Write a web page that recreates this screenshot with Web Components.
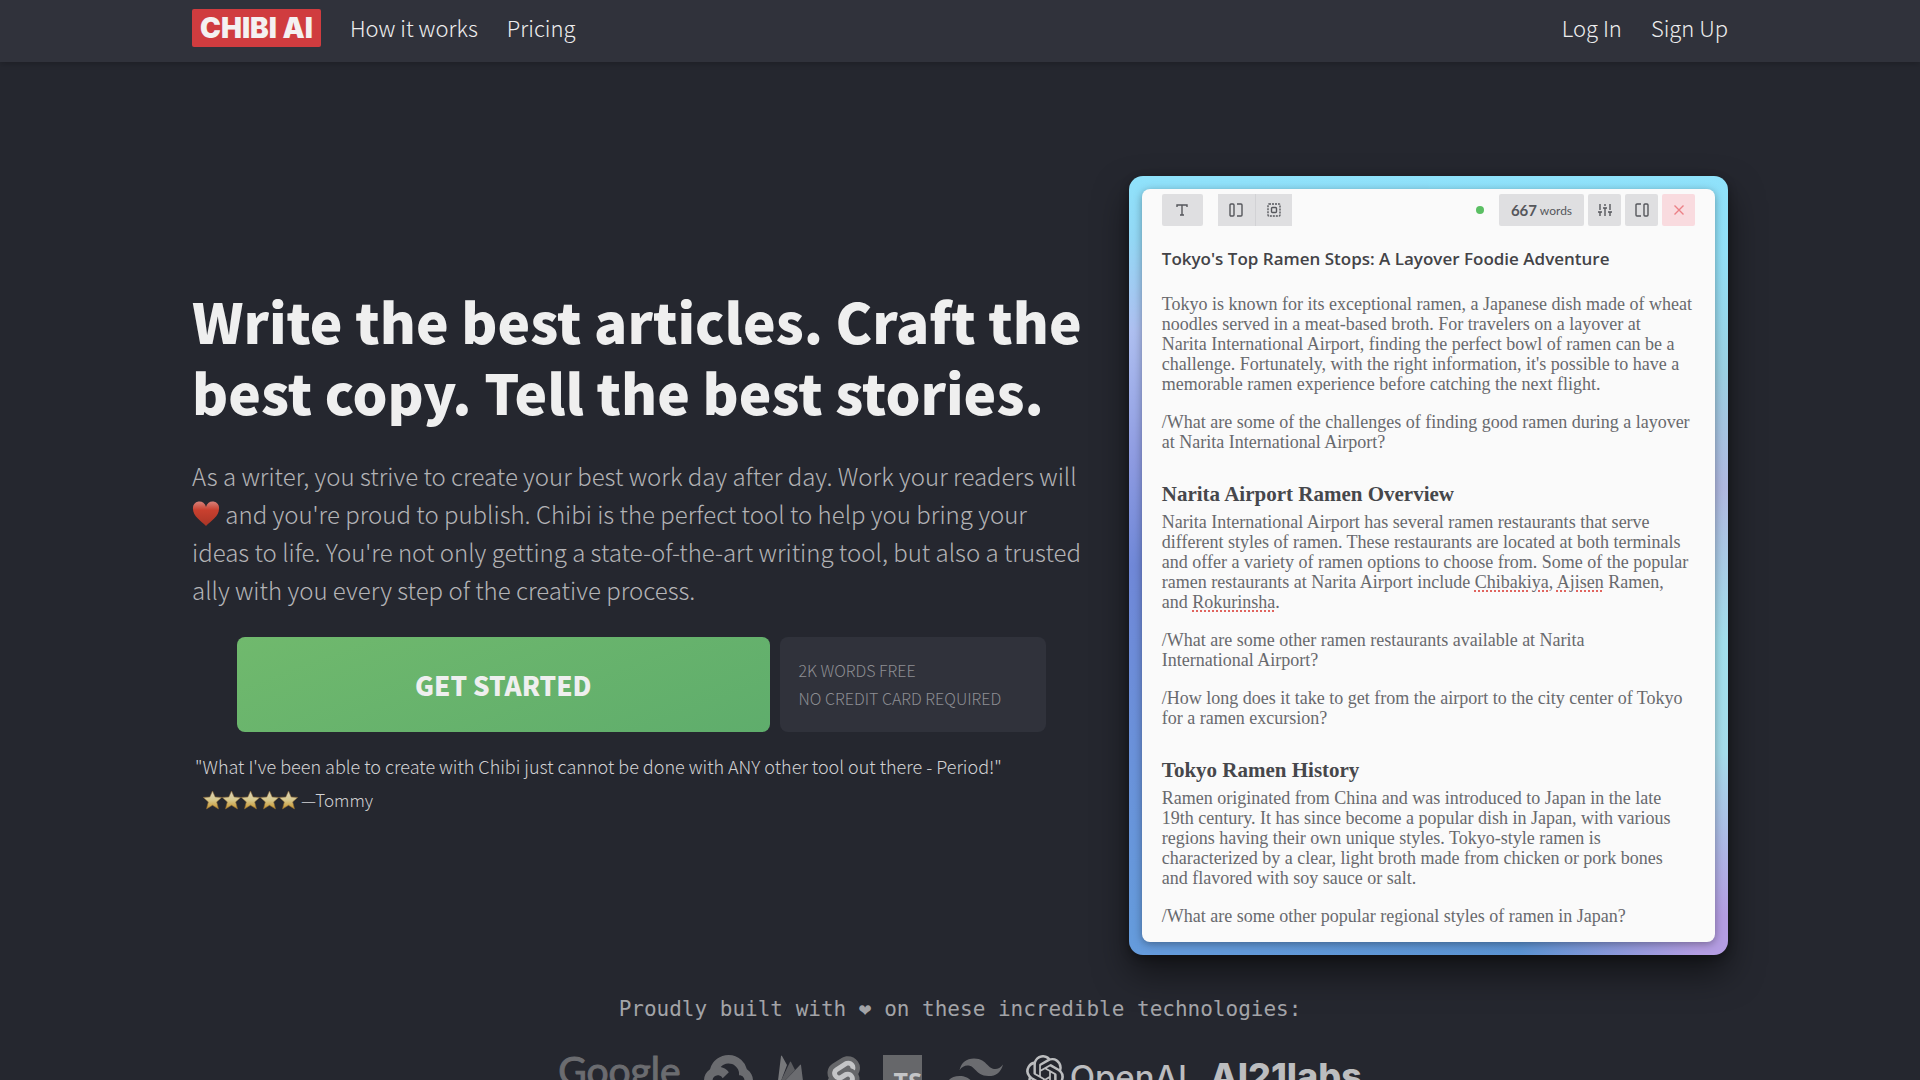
<!DOCTYPE html>
<html lang="en">
<head>
<meta charset="utf-8">
<title>Chibi AI</title>
<style>
  html, body { height: 100%; }
  body {
    margin: 0;
    overflow: hidden;
    background: #25272f;
    color: #ededee;
    font-family: "Noto Sans CJK SC", "Open Sans", sans-serif;
  }
</style>
</head>
<body>
<chibi-nav>
  <a href="#how">How it works</a>
  <a href="#pricing">Pricing</a>
  <a href="#login" slot="account">Log In</a>
  <a href="#signup" slot="account">Sign Up</a>
</chibi-nav>
<chibi-hero>
  <hero-copy></hero-copy>
  <editor-card slot="preview"></editor-card>
</chibi-hero>
<tech-strip></tech-strip>

<script>
const define = (name, html) => {
  const template = document.createElement("template")
  template.innerHTML = html
  customElements.define(name, class extends HTMLElement {
    constructor() {
      super()
      this.attachShadow({ mode: "open" })
      this.shadowRoot.appendChild(template.content.cloneNode(true))
    }
  })
}

define("chibi-nav", `
<style>
  :host {
    display: flex;
    align-items: center;
    height: 62px;
    padding: 0 10%;
    background: #30323b;
    box-shadow: 0 2px 6px rgba(0, 0, 0, .2);
  }
  nav { display: flex; flex: 1; align-items: center; justify-content: space-between; padding-bottom: 6px; }
  div { display: flex; align-items: center; gap: 29px; }
  .logo {
    padding: 0 8px;
    border-radius: 2px;
    background: #d03c3f;
    color: #f4f1f1;
    font: 900 28px/38px Inter, sans-serif;
    text-decoration: none;
  }
  ::slotted(a) { padding-bottom: 2px; color: #ededee; font-size: 22px; font-weight: 300; line-height: 36px; text-decoration: none; }
</style>
<nav>
  <div><a class="logo" href="#home">CHIBI AI</a><slot></slot></div>
  <div><slot name="account"></slot></div>
</nav>
`)

define("chibi-hero", `
<style>
  :host {
    display: grid;
    grid-template-columns: minmax(0, 3fr) minmax(0, 2fr);
    column-gap: 38px;
    align-items: center;
    padding: 114px 10% 0;
  }
</style>
<slot></slot>
<slot name="preview"></slot>
`)

define("hero-copy", `
<style>
  :host { display: block; padding-bottom: 30px; }
  h1 { margin: 0; color: #efefef; font-size: 55px; line-height: 71px; font-weight: 900; white-space: nowrap; }
  .lead { margin: 30px 0 28px; color: #b3b3b6; font-size: 24px; line-height: 38px; font-weight: 300; white-space: nowrap; }
  .heart { width: 28px; height: 26px; vertical-align: -3px; }
  .cta { display: grid; grid-template-columns: 2fr 1fr; gap: 10px; width: 90%; margin: 0 auto; }
  button {
    height: 95px;
    border: 0;
    border-radius: 8px;
    background: linear-gradient(160deg, #70b96d, #5fad6c);
    color: #efefef;
    font: inherit;
    font-size: 26px;
    font-weight: 900;
  }
  .terms { display: flex; flex-direction: column; justify-content: center; padding: 0 19px; border-radius: 8px; background: #30323b; color: #8d8e93; font-size: 16px; line-height: 28px; font-weight: 300; white-space: nowrap; }
  blockquote { margin: 17px 3px 0; color: #d2d2d4; font-size: 18px; line-height: 34px; font-weight: 300; white-space: nowrap; }
  footer { display: flex; align-items: center; gap: 3px; padding-left: 8px; font-size: 17px; }
  .stars { width: 95px; height: 20px; }
</style>
<h1>Write the best articles. Craft the<br>best copy. Tell the best stories.</h1>
<p class="lead">As a writer, you strive to create your best work day after day. Work your readers will<br>
<svg class="heart" viewBox="0 0 28 26" role="img" aria-label="love">
  <defs><linearGradient id="h" x2="0" y2="1"><stop offset="0" stop-color="#d9827a"/><stop offset=".35" stop-color="#c9402f"/><stop offset="1" stop-color="#a93526"/></linearGradient></defs>
  <path fill="url(#h)" d="M14 25C9 20 1 15 1 8a6.500 6.500 0 0 1 13-2 6.500 6.500 0 0 1 13 2c0 7-8 12-13 17Z"/>
</svg> and you're proud to publish. Chibi is the perfect tool to help you bring your<br>
ideas to life. You're not only getting a state-of-the-art writing tool, but also a trusted<br>
ally with you every step of the creative process.</p>
<div class="cta">
  <button type="button">GET STARTED</button>
  <div class="terms"><span>2K WORDS FREE</span><span>NO CREDIT CARD REQUIRED</span></div>
</div>
<blockquote>"What I've been able to create with Chibi just cannot be done with ANY other tool out there - Period!"
  <footer>
    <svg class="stars" viewBox="0 0 95 20" role="img" aria-label="5 stars">
      <defs>
        <linearGradient id="s" x2="0" y2="1"><stop offset="0" stop-color="#d9d3bd"/><stop offset=".5" stop-color="#d8c98e"/><stop offset="1" stop-color="#c9952c"/></linearGradient>
        <path id="star" fill="url(#s)" stroke="#8b6a35" stroke-width=".6" d="m9.500 1 2.700 6 6.500.400-5 4.500 1.800 7-6-3.600-6 3.600 1.800-7-5-4.500L6.800 7Z"/>
      </defs>
      <use href="#star"/><use href="#star" x="19"/><use href="#star" x="38"/><use href="#star" x="57"/><use href="#star" x="76"/>
    </svg>
    <span>—Tommy</span>
  </footer>
</blockquote>
`)

define("tool-button", `
<style>
  :host { display: flex; }
  button { display: flex; flex: 1; align-items: center; justify-content: center; padding: 0; border: 0; border-radius: var(--radius, 2px); background: var(--tool-bg, #dfdfe1); color: var(--tool-ink, #56575c); font: 14px Lato, sans-serif; }
</style>
<button type="button"><slot></slot></button>
`)

define("editor-toolbar", `
<style>
  :host { display: flex; align-items: center; height: 32px; gap: 4px; }
  tool-button { width: 33px; height: 32px; }
  .type { width: 41px; margin-right: 11px; }
  .pair { display: flex; gap: 1px; background: #d2d2d5; }
  .pair tool-button { width: 37px; --radius: 0; }
  .pair tool-button + tool-button { width: 36px; }
  .dot { width: 8px; height: 8px; margin: 0 11px 0 auto; border-radius: 50%; background: #5abf63; }
  .count { width: 85px; white-space: pre; }
  .count b { font-size: 15px; }
  .count span { font-size: 12px; }
  .close { --tool-bg: #f9dbdf; --tool-ink: #ec8086; }
  svg { width: 16px; height: 16px; fill: none; stroke: currentColor; stroke-width: 1.400; }
</style>
<tool-button class="type"><svg viewBox="0 0 16 16"><path d="M3 5V3h10v2M8 3v10M6 13h4"/></svg></tool-button>
<div class="pair">
  <tool-button><svg viewBox="0 0 16 16"><rect x="2" y="2" width="4" height="12" rx="1"/><path d="M9 2h4q1 0 1 1v10q0 1-1 1H9"/></svg></tool-button>
  <tool-button><svg viewBox="0 0 16 16"><rect x="2" y="2" width="12" height="12" rx="1" stroke-dasharray="2 1"/><rect x="5.500" y="5.500" width="5" height="5" rx="1"/></svg></tool-button>
</div>
<span class="dot"></span>
<tool-button class="count"><b>667</b><span> words</span></tool-button>
<tool-button><svg viewBox="0 0 16 16"><path d="M3 2v6M8 2v2M8 6v8M13 2v6M3 10v4M13 10v4M1 10h4M6 6h4M11 10h4"/></svg></tool-button>
<tool-button><svg viewBox="0 0 16 16"><rect x="10" y="2" width="4" height="12" rx="1"/><path d="M7 2H3Q2 2 2 3v10q0 1 1 1h4"/></svg></tool-button>
<tool-button class="close"><svg viewBox="0 0 16 16"><path d="m3.500 3.500 9 9m0-9-9 9"/></svg></tool-button>
`)

define("editor-card", `
<style>
  :host {
    display: block;
    padding: 13px;
    border-radius: 14px;
    background:
      linear-gradient(90deg, #659bdc, #5b93d2 65%, #b49de2 95%) 0 100% / 100% 13px no-repeat,
      linear-gradient(#8fe2fb, #93d8f5 8%, #aebff0 20%, #8f9ce2 36%, #7088d8 50%, #659bdc 97%) 0 0 / 50% 100% no-repeat,
      linear-gradient(#8fe2fb, #93e0f7 10%, #9bd0e2 25%, #b0b8e0 40%, #a2dfec 60%, #a5dcea 74%, #b49de2 95%);
    box-shadow: 0 18px 34px rgba(0, 0, 0, .5), 0 3px 10px rgba(0, 0, 0, .3);
  }
  article {
    padding: 5px 20px 16px;
    border-radius: 8px;
    background: #fafafa;
    box-shadow: 0 2px 8px rgba(0, 0, 0, .35);
    color: #68696d;
    font: 18px/20px "Liberation Serif", serif;
    white-space: nowrap;
  }
  h2 { margin: 19px 0 21px; color: #434347; font: 600 17px/28px "Open Sans", sans-serif; }
  h3 { margin: 28px 0 4px; color: #46474b; font-size: 21px; line-height: 28px; }
  p { margin: 0 0 18px; }
  p:last-child { margin: 0; }
  u { text-decoration: underline dotted #e0645e 2px; text-underline-offset: 2px; }
</style>
<article>
  <editor-toolbar></editor-toolbar>
  <h2>Tokyo's Top Ramen Stops: A Layover Foodie Adventure</h2>
  <p>Tokyo is known for its exceptional ramen, a Japanese dish made of wheat<br>noodles served in a meat-based broth. For travelers on a layover at<br>Narita International Airport, finding the perfect bowl of ramen can be a<br>challenge. Fortunately, with the right information, it's possible to have a<br>memorable ramen experience before catching the next flight.</p>
  <p>/What are some of the challenges of finding good ramen during a layover<br>at Narita International Airport?</p>
  <h3>Narita Airport Ramen Overview</h3>
  <p>Narita International Airport has several ramen restaurants that serve<br>different styles of ramen. These restaurants are located at both terminals<br>and offer a variety of ramen options to choose from. Some of the popular<br>ramen restaurants at Narita Airport include <u>Chibakiya</u>, <u>Ajisen</u> Ramen,<br>and <u>Rokurinsha</u>.</p>
  <p>/What are some other ramen restaurants available at Narita<br>International Airport?</p>
  <p>/How long does it take to get from the airport to the city center of Tokyo<br>for a ramen excursion?</p>
  <h3>Tokyo Ramen History</h3>
  <p>Ramen originated from China and was introduced to Japan in the late<br>19th century. It has since become a popular dish in Japan, with various<br>regions having their own unique styles. Tokyo-style ramen is<br>characterized by a clear, light broth made from chicken or pork bones<br>and flavored with soy sauce or salt.</p>
  <p>/What are some other popular regional styles of ramen in Japan?</p>
</article>
`)

define("tech-strip", `
<style>
  :host { display: block; padding-top: 40px; color: #a3a4a8; text-align: center; }
  p { margin: 0 0 32px; font: 21px/28px "DejaVu Sans Mono", monospace; }
  .logos { display: flex; justify-content: center; align-items: flex-start; gap: 23px; color: #6b6c70; }
  svg { display: block; height: 42px; }
  .google { font: 39px/30px Lato, sans-serif; -webkit-text-stroke: 1px; }
  .openai { display: flex; gap: 6px; color: #bcbdbf; font: 500 33px/44px Inter, sans-serif; }
  .openai svg { height: 38px; }
  .ai21 { color: #bcbdbf; font: 800 36px/42px Inter, sans-serif; }
  .ts { display: flex; align-items: flex-end; justify-content: flex-end; width: 39px; height: 39px; background: #66676a; color: #c4c5c7; font: 700 25px/26px "Open Sans", sans-serif; }
</style>
<p>Proudly built with ❤ on these incredible technologies:</p>
<div class="logos">
  <span class="google">Google</span>
  <svg width="49" viewBox="0 2.380 24 20.500" fill="currentColor" role="img" aria-label="Google Cloud"><path d="M12.190 2.380a9.344 9.344 0 0 0-9.234 6.893c.053-.020-.055.013 0 0-3.875 2.551-3.922 8.110-.247 10.941l.006-.007-.007.030a6.717 6.717 0 0 0 4.077 1.356h5.173l.030.030h5.192c6.687.053 9.376-8.605 3.835-12.350a9.365 9.365 0 0 0-2.821-4.552l-.043.043.006-.050A9.344 9.344 0 0 0 12.190 2.380zm-.358 4.146c1.244-.040 2.518.368 3.486 1.150a5.186 5.186 0 0 1 1.862 4.078v.518c3.530-.070 3.530 5.262 0 5.193h-5.193l-.008.009v-.040H6.785a2.590 2.590 0 0 1-1.067-.230h.001a2.597 2.597 0 1 1 3.437-3.437l3.013-3.012A6.747 6.747 0 0 0 8.110 8.240c.018-.010.040-.026.054-.023a5.186 5.186 0 0 1 3.670-1.690z"/></svg>
  <svg width="28" viewBox="0 0 28 42" role="img" aria-label="Firebase"><path fill="#77787b" d="M1 34 5 1q.500-1 1 0l5 9-9 24Z"/><path fill="#5b5c60" d="m1 34 13-27q.500-1 1 0l4 8Z"/><path fill="#6b6c70" d="m1 34 23-24q1-1 1 0l3 24-14 8Z"/></svg>
  <svg width="33" viewBox="2 0 20 24" role="img" aria-label="Svelte"><path fill="#66676a" d="M20.712 3.175C18.484-.015 14.082-.960 10.900 1.068L5.310 4.630a6.412 6.412 0 0 0-2.896 4.295 6.753 6.753 0 0 0 .666 4.336 6.430 6.430 0 0 0-.960 2.396 6.833 6.833 0 0 0 1.168 5.167c2.229 3.190 6.630 4.135 9.812 2.108l5.590-3.562a6.410 6.410 0 0 0 2.896-4.295 6.756 6.756 0 0 0-.665-4.336 6.429 6.429 0 0 0 .958-2.396 6.831 6.831 0 0 0-1.167-5.168Z"/><path fill="#c4c5c7" d="M10.354 21.125a4.440 4.440 0 0 1-4.765-1.767 4.109 4.109 0 0 1-.703-3.107 3.898 3.898 0 0 1 .134-.522l.105-.321.287.210a7.210 7.210 0 0 0 2.186 1.092l.208.063-.020.208a1.253 1.253 0 0 0 .226.830 1.337 1.337 0 0 0 1.435.533 1.231 1.231 0 0 0 .343-.150l5.590-3.562a1.164 1.164 0 0 0 .524-.778 1.242 1.242 0 0 0-.211-.937 1.338 1.338 0 0 0-1.435-.533 1.230 1.230 0 0 0-.343.150l-2.133 1.360a4.078 4.078 0 0 1-1.135.499 4.440 4.440 0 0 1-4.765-1.766 4.108 4.108 0 0 1-.702-3.108 3.855 3.855 0 0 1 1.742-2.582l5.589-3.563a4.072 4.072 0 0 1 1.135-.499 4.440 4.440 0 0 1 4.765 1.767 4.109 4.109 0 0 1 .703 3.107 3.943 3.943 0 0 1-.134.522l-.105.321-.286-.210a7.204 7.204 0 0 0-2.187-1.093l-.208-.063.020-.207a1.255 1.255 0 0 0-.226-.831 1.337 1.337 0 0 0-1.435-.532 1.231 1.231 0 0 0-.343.150L8.620 9.368a1.162 1.162 0 0 0-.524.778 1.240 1.240 0 0 0 .211.937 1.338 1.338 0 0 0 1.435.533 1.235 1.235 0 0 0 .344-.151l2.132-1.360a4.067 4.067 0 0 1 1.135-.498 4.440 4.440 0 0 1 4.765 1.766 4.108 4.108 0 0 1 .702 3.108 3.857 3.857 0 0 1-1.742 2.583l-5.589 3.562a4.072 4.072 0 0 1-1.135.499"/></svg>
  <span class="ts">TS</span>
  <svg width="58" viewBox="0 4 24 16" fill="currentColor" role="img" aria-label="Tailwind CSS"><path d="M12 4.800c-3.200 0-5.200 1.600-6 4.800 1.200-1.600 2.600-2.200 4.200-1.800.913.228 1.565.890 2.288 1.624C13.666 10.618 15.027 12 18 12c3.200 0 5.200-1.600 6-4.800-1.200 1.600-2.600 2.200-4.200 1.800-.913-.228-1.565-.890-2.288-1.624C16.337 6.182 14.976 4.800 12 4.800zM6 12c-3.200 0-5.200 1.600-6 4.800 1.200-1.600 2.600-2.200 4.200-1.800.913.228 1.565.890 2.288 1.624C7.666 17.818 9.027 19.200 12 19.200c3.200 0 5.200-1.600 6-4.800-1.200 1.600-2.600 2.200-4.200 1.800-.913-.228-1.565-.890-2.288-1.624C10.337 13.382 8.976 12 6 12z"/></svg>
  <span class="openai"><svg width="38" viewBox="0 0 24 24" fill="currentColor" aria-hidden="true"><path d="M22.282 9.821a5.985 5.985 0 0 0-.516-4.910 6.046 6.046 0 0 0-6.510-2.900A6.065 6.065 0 0 0 4.981 4.182a5.985 5.985 0 0 0-3.998 2.900 6.046 6.046 0 0 0 .743 7.097 5.980 5.980 0 0 0 .510 4.911 6.051 6.051 0 0 0 6.515 2.900A5.985 5.985 0 0 0 13.260 24a6.056 6.056 0 0 0 5.772-4.206 5.990 5.990 0 0 0 3.998-2.900 6.056 6.056 0 0 0-.748-7.073zM13.260 22.430a4.476 4.476 0 0 1-2.876-1.040l.141-.081 4.779-2.758a.795.795 0 0 0 .392-.681v-6.737l2.020 1.168a.071.071 0 0 1 .038.052v5.583a4.504 4.504 0 0 1-4.494 4.494zM3.600 18.304a4.470 4.470 0 0 1-.535-3.014l.142.085 4.783 2.759a.771.771 0 0 0 .780 0l5.843-3.369v2.332a.080.080 0 0 1-.033.062L9.740 19.950a4.500 4.500 0 0 1-6.140-1.646zM2.341 7.896a4.485 4.485 0 0 1 2.366-1.973V11.600a.766.766 0 0 0 .388.676l5.815 3.355-2.020 1.168a.076.076 0 0 1-.071 0l-4.830-2.786A4.504 4.504 0 0 1 2.341 7.872zm16.597 3.855-5.833-3.387L15.119 7.200a.076.076 0 0 1 .071 0l4.830 2.791a4.494 4.494 0 0 1-.676 8.105v-5.678a.790.790 0 0 0-.407-.667zm2.010-3.023-.141-.085-4.774-2.782a.776.776 0 0 0-.785 0L9.409 9.230V6.897a.066.066 0 0 1 .028-.061l4.830-2.787a4.500 4.500 0 0 1 6.680 4.660zM8.307 12.863l-2.020-1.164a.080.080 0 0 1-.038-.057V6.074a4.500 4.500 0 0 1 7.376-3.453l-.142.080L8.704 5.459a.795.795 0 0 0-.393.681zm1.097-2.365 2.602-1.500 2.607 1.500v2.999l-2.597 1.500-2.607-1.500Z"/></svg>OpenAI</span>
  <span class="ai21">AI21labs</span>
</div>
`)
</script>
</body>
</html>
